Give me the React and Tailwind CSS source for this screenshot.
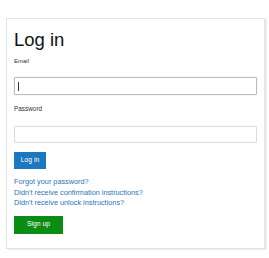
export default function App() {
  const font = { fontFamily: '"Liberation Sans", Arial, sans-serif' };
  return (
    <div className="w-[269px] h-[258px] bg-white" style={font}>
      <div className="pt-[18px] pl-[6px]">
        <div className="w-[259px] h-[231px] border border-[#e3e3e3] bg-white shadow-[2px_1px_0_0_#ececec] px-[7px] flex flex-col">
          <h1 className="mt-[9px] text-[18.5px] leading-[24px] text-[#111] font-normal">Log in</h1>
          <label className="mt-[5px] text-[6px] leading-[8px] text-[#333]">Email</label>
          <div className="mt-[12px] w-[243px] h-[18px] border border-[#bdbdbd] rounded-[1px] shadow-[0_0_2px_rgba(0,0,0,0.12)] flex items-center pl-[3px]">
            <div className="w-px h-[9px] bg-[#333]" />
          </div>
          <label className="mt-[10px] text-[6.4px] leading-[8px] text-[#333]">Password</label>
          <div className="mt-[13px] w-[243px] h-[17px] border border-[#dcdcdc] rounded-[1px]" />
          <div className="mt-[9px] w-[32px] h-[17px] bg-[#1b78bf] text-white text-[6.8px] flex items-center justify-center">Log in</div>
          <div className="mt-[8px] flex flex-col text-[7.3px] leading-[10.5px] text-[#2a74b8]">
            <span>Forgot your password?</span>
            <span>Didn't receive confirmation instructions?</span>
            <span>Didn't receive unlock instructions?</span>
          </div>
          <div className="mt-[7px] w-[49px] h-[18px] bg-[#0b8c12] text-white text-[6.8px] flex items-center justify-center">Sign up</div>
        </div>
      </div>
    </div>
  );
}
